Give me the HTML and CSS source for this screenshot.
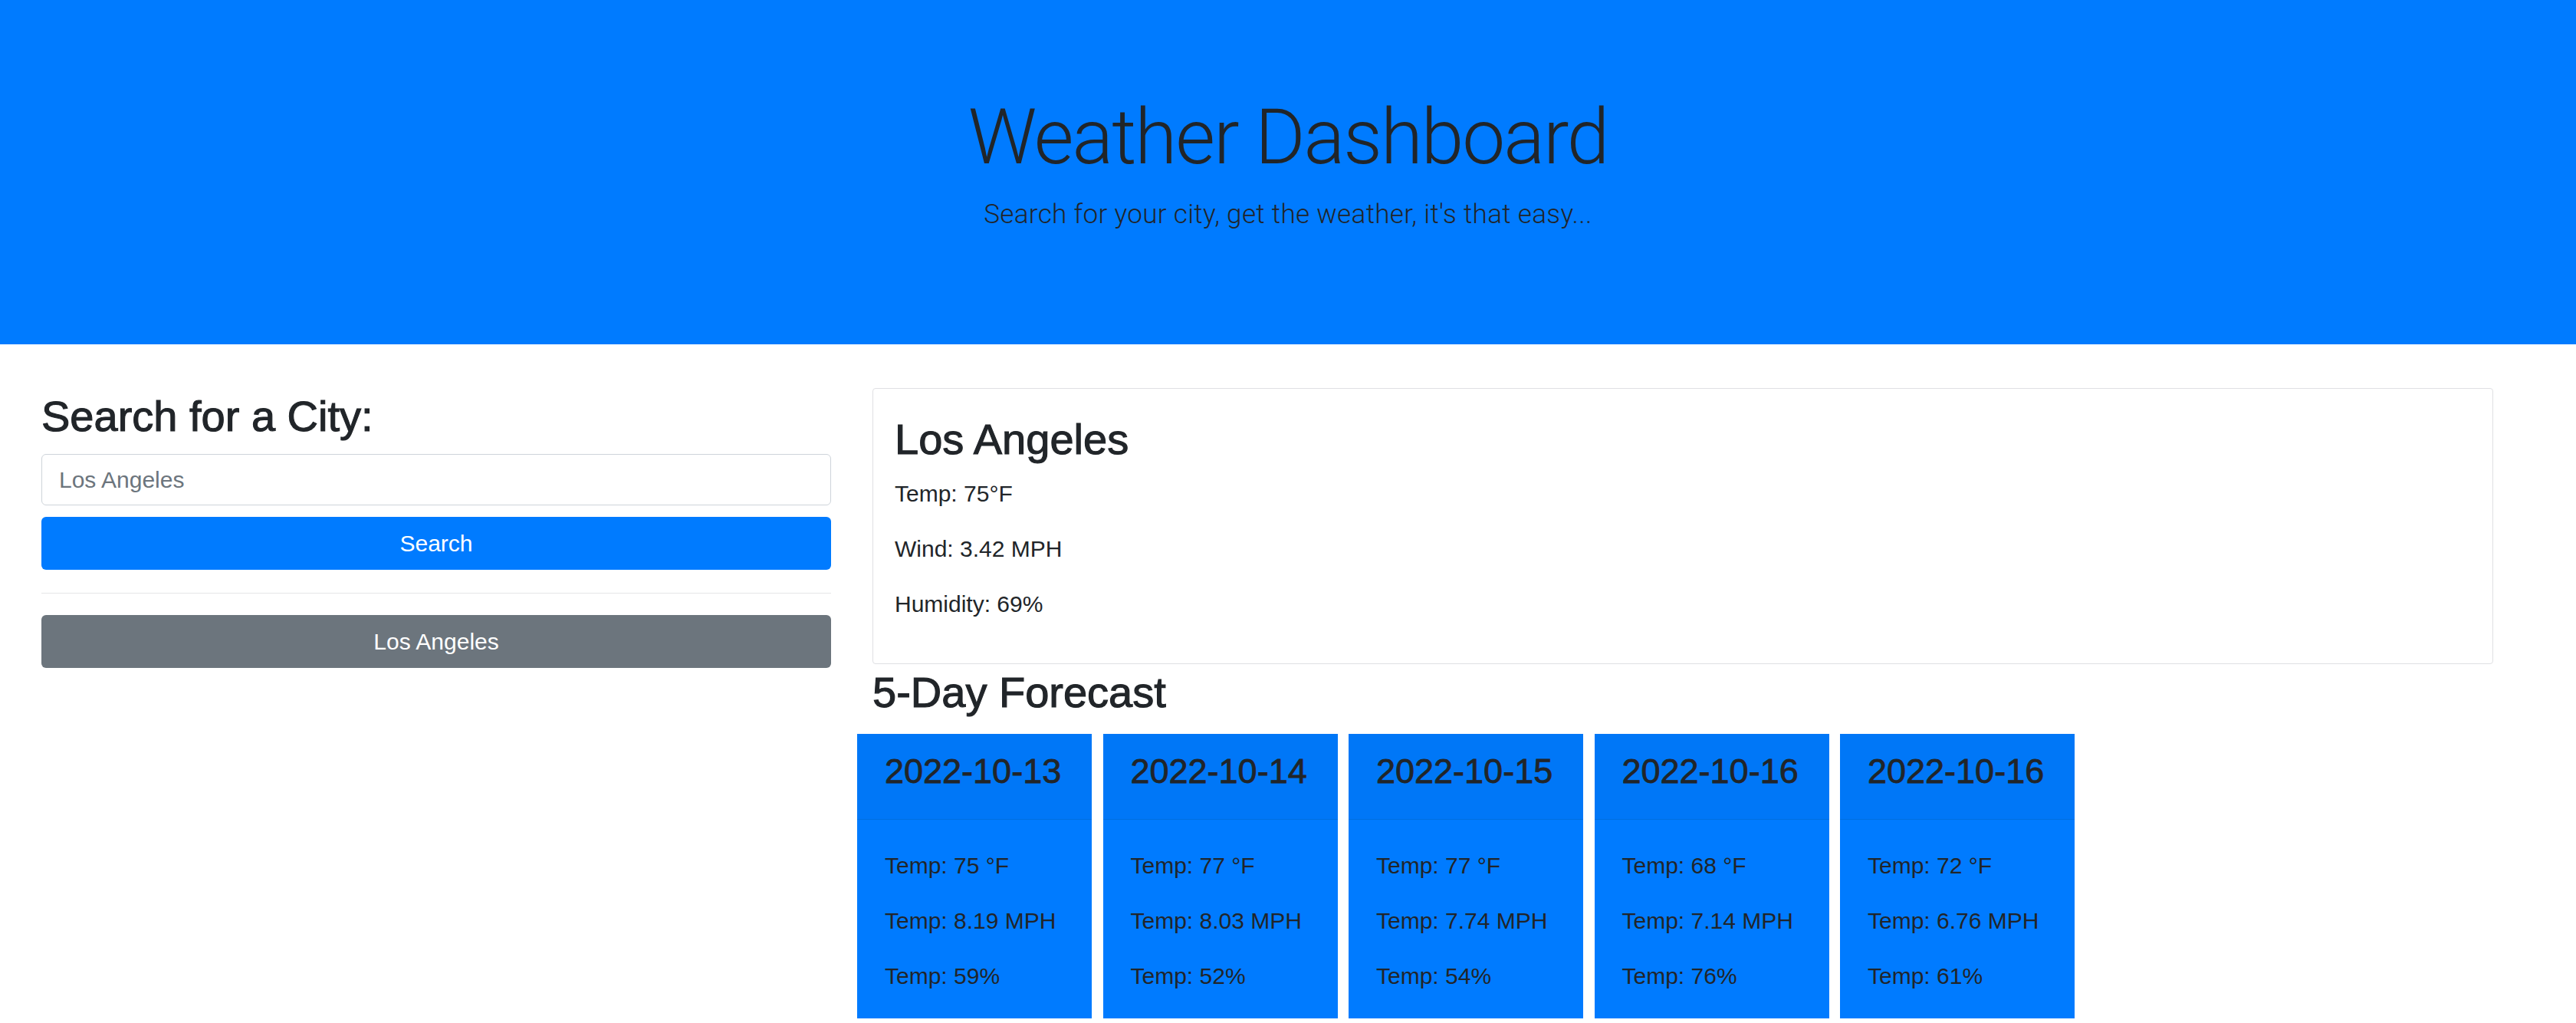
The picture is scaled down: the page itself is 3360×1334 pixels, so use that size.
FILE: index.html
```html
<!DOCTYPE html>
<html lang="en">
<head>
<meta charset="utf-8">
<title>Weather Dashboard</title>
<link rel="stylesheet" href="styles.css">
</head>
<body>
<header class="jumbotron">
  <h1 class="display">Weather Dashboard</h1>
  <p class="lead">Search for your city, get the weather, it's that easy...</p>
</header>
<main class="main">
  <aside class="sidebar">
    <h3 class="heading">Search for a City:</h3>
    <input class="city-input" type="text" placeholder="Los Angeles">
    <button class="btn btn-primary" type="button">Search</button>
    <hr class="divider">
    <button class="btn btn-secondary" type="button">Los Angeles</button>
  </aside>
  <section class="content">
    <div class="current-card">
      <h3 class="heading">Los Angeles</h3>
      <p class="stat">Temp: 75°F</p>
      <p class="stat">Wind: 3.42 MPH</p>
      <p class="stat">Humidity: 69%</p>
    </div>
    <h3 class="heading forecast-title">5-Day Forecast</h3>
    <div class="forecast-row">
      <div class="f-card">
        <div class="f-head"><h4 class="f-date">2022-10-13</h4></div>
        <div class="f-body">
          <p class="stat">Temp: 75 °F</p>
          <p class="stat">Temp: 8.19 MPH</p>
          <p class="stat">Temp: 59%</p>
        </div>
      </div>
      <div class="f-card">
        <div class="f-head"><h4 class="f-date">2022-10-14</h4></div>
        <div class="f-body">
          <p class="stat">Temp: 77 °F</p>
          <p class="stat">Temp: 8.03 MPH</p>
          <p class="stat">Temp: 52%</p>
        </div>
      </div>
      <div class="f-card">
        <div class="f-head"><h4 class="f-date">2022-10-15</h4></div>
        <div class="f-body">
          <p class="stat">Temp: 77 °F</p>
          <p class="stat">Temp: 7.74 MPH</p>
          <p class="stat">Temp: 54%</p>
        </div>
      </div>
      <div class="f-card">
        <div class="f-head"><h4 class="f-date">2022-10-16</h4></div>
        <div class="f-body">
          <p class="stat">Temp: 68 °F</p>
          <p class="stat">Temp: 7.14 MPH</p>
          <p class="stat">Temp: 76%</p>
        </div>
      </div>
      <div class="f-card">
        <div class="f-head"><h4 class="f-date">2022-10-16</h4></div>
        <div class="f-body">
          <p class="stat">Temp: 72 °F</p>
          <p class="stat">Temp: 6.76 MPH</p>
          <p class="stat">Temp: 61%</p>
        </div>
      </div>
    </div>
  </section>
</main>
</body>
</html>
```

FILE: styles.css
```css
* { box-sizing: border-box; }

html, body {
  margin: 0;
  padding: 0;
  background: #ffffff;
}

body {
  font-family: "Liberation Sans", Arial, sans-serif;
  font-size: 30px;
  line-height: 45px;
  color: #212529;
}

.jumbotron {
  background: #007bff;
  height: 449px;
  padding-top: 119px;
  text-align: center;
}

.display {
  margin: 0 0 15px;
  font-family: Roboto, "Liberation Sans", sans-serif;
  font-weight: 300;
  font-size: 100px;
  line-height: 120px;
  letter-spacing: -2px;
  color: #212529;
}

.lead {
  margin: 0;
  font-family: Roboto, "Liberation Sans", sans-serif;
  font-weight: 300;
  font-size: 35px;
  line-height: 51px;
  letter-spacing: 0.35px;
  color: #212529;
}

.main {
  display: flex;
  align-items: flex-start;
  gap: 54px;
  padding: 57px 0 40px 54px;
}

.sidebar {
  width: 1030px;
  flex: none;
  display: flex;
  flex-direction: column;
}

.heading {
  margin: 0;
  font-size: 56px;
  line-height: 67px;
  font-weight: 400;
  -webkit-text-stroke: 1.1px #212529;
  color: #212529;
}

.sidebar .heading {
  margin: 3px 0 16px;
}

.city-input {
  display: block;
  width: 100%;
  height: 67px;
  margin: 0 0 15px;
  padding: 0 22px;
  border: 1px solid #ced4da;
  border-radius: 6px;
  font-family: "Liberation Sans", Arial, sans-serif;
  font-size: 30px;
  color: #495057;
  background: #fff;
  outline: none;
}

.city-input::placeholder {
  color: #6c757d;
  opacity: 1;
}

.btn {
  display: block;
  width: 100%;
  height: 69px;
  padding: 0;
  border: none;
  border-radius: 6px;
  font-family: "Liberation Sans", Arial, sans-serif;
  font-size: 30px;
  line-height: 69px;
  color: #ffffff;
  text-align: center;
  cursor: pointer;
}

.btn-primary { background: #007bff; }
.btn-secondary { background: #6c757d; }

.divider {
  margin: 30px 0 28px;
  border: 0;
  border-top: 1px solid #e5e6e8;
  height: 0;
}

.content {
  width: 2114px;
  flex: none;
}

.current-card {
  border: 1px solid #dfe0e3;
  border-radius: 4px;
  padding: 32px 28px 28px;
}

.current-card .heading {
  margin-bottom: 15px;
}

.stat {
  margin: 0 0 27px;
  font-size: 30px;
  line-height: 45px;
}

.forecast-title {
  margin: 3px 0 21px;
}

.forecast-row {
  display: flex;
  gap: 14.5px;
  margin-left: -20px;
}

.f-card {
  width: 306px;
  flex: none;
  background: #007bff;
}

.f-head {
  background: #0077f7;
  border-bottom: 1px solid #006fdf;
  padding: 22px 36px 35px;
}

.f-date {
  margin: 0;
  font-size: 45px;
  line-height: 54px;
  font-weight: 400;
  -webkit-text-stroke: 0.8px #212529;
  color: #212529;
}

.f-body {
  padding: 37px 36px 6px;
}
```
